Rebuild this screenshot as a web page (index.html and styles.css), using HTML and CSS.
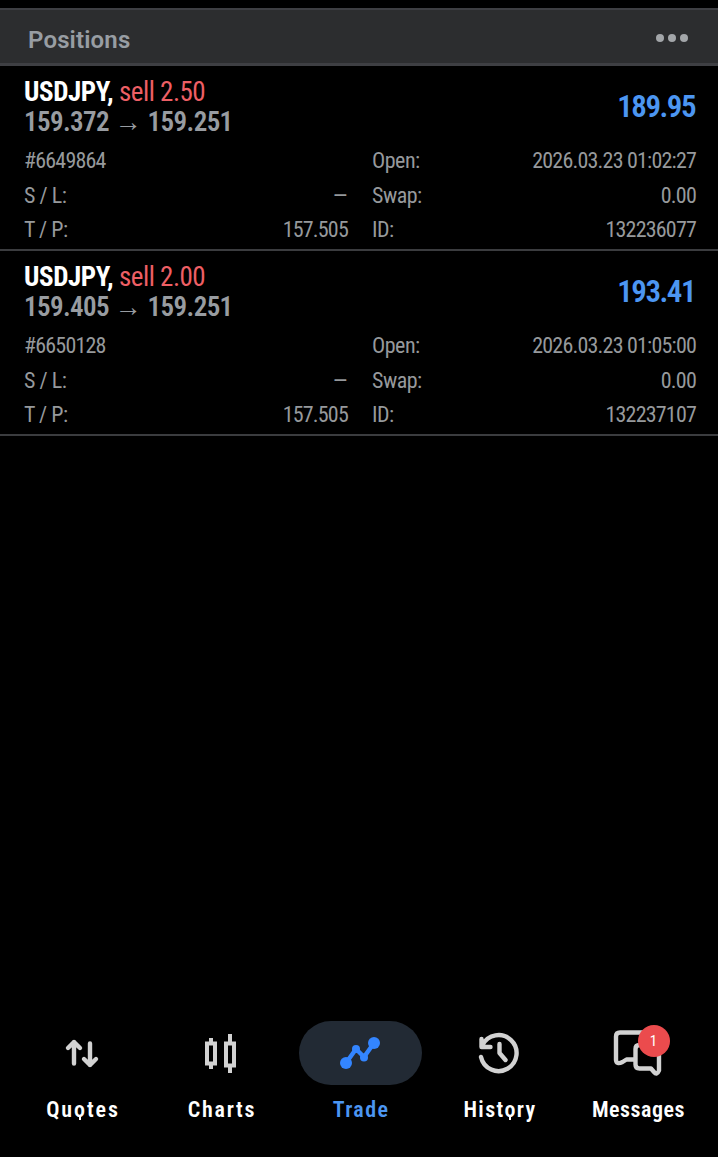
FILE: index.html
```html
<!DOCTYPE html>
<html lang="en">
<head>
<meta charset="utf-8">
<title>Trade</title>
<link rel="stylesheet" href="styles.css">
</head>
<body>
<header class="bar">
	<h1>Positions</h1>
	<div class="more"><i></i><i></i><i></i></div>
</header>
<main>
	<section class="position">
		<div class="summary">
			<div>
				<p class="symbol"><b>USDJPY,</b> <span class="sell">sell 2.50</span></p>
				<p class="prices">159.372 <span class="arrow">→</span> 159.251</p>
			</div>
			<p class="profit">189.95</p>
		</div>
		<div class="details">
			<p><span class="num">#6649864</span></p>
			<p><span>Open:</span><span class="num">2026.03.23 01:02:27</span></p>
			<p><span>S / L:</span><span class="dash">–</span></p>
			<p><span>Swap:</span><span class="num">0.00</span></p>
			<p><span>T / P:</span><span class="num">157.505</span></p>
			<p><span>ID:</span><span class="num">132236077</span></p>
		</div>
	</section>
	<section class="position">
		<div class="summary">
			<div>
				<p class="symbol"><b>USDJPY,</b> <span class="sell">sell 2.00</span></p>
				<p class="prices">159.405 <span class="arrow">→</span> 159.251</p>
			</div>
			<p class="profit">193.41</p>
		</div>
		<div class="details">
			<p><span class="num">#6650128</span></p>
			<p><span>Open:</span><span class="num">2026.03.23 01:05:00</span></p>
			<p><span>S / L:</span><span class="dash">–</span></p>
			<p><span>Swap:</span><span class="num">0.00</span></p>
			<p><span>T / P:</span><span class="num">157.505</span></p>
			<p><span>ID:</span><span class="num">132237107</span></p>
		</div>
	</section>
</main>
<nav class="tabs">
	<a class="tab quotes">
		<span class="pill"><svg width="64" height="64" viewBox="0 0 64 64"><path d="M24 42.500V21M18 27l6-6 6 6M40 22.500v21.500M34 38l6 6 6-6"/></svg></span>
		<span class="label">Qu<span class="pin">o</span>tes</span>
	</a>
	<a class="tab charts">
		<span class="pill"><svg class="square" width="64" height="64" viewBox="0 0 64 64"><path d="M18 22.500h8v20h-8zM22 17v5M22 43v5M37 22.500h8v22h-8zM41 13v9M41 45v7"/></svg></span>
		<span class="label">Charts</span>
	</a>
	<a class="tab trade active">
		<span class="pill"><svg width="64" height="64" viewBox="0 0 64 64"><path d="M18 42L28 28l8 8L46 22"/><g class="dots"><circle cx="18" cy="42" r="6"/><circle cx="28" cy="28" r="4"/><circle cx="36" cy="36.500" r="4"/><circle cx="46" cy="22" r="6"/></g></svg></span>
		<span class="label">Trade</span>
	</a>
	<a class="tab history">
		<span class="pill"><svg width="64" height="64" viewBox="0 0 64 64"><path d="M14 36A18 18 0 1 0 15.500 24M14.500 18v8h9M32.500 23v9l6 7"/></svg></span>
		<span class="label">Hist<span class="pin">o</span>ry</span>
	</a>
	<a class="tab messages">
		<span class="pill"><svg width="64" height="64" viewBox="0 0 64 64"><path d="M28 38.500H20.500l-4 2.500q-6 3-6.500-2V15.500q0-4 4-4h30q4 0 4 4M33.500 24H49q4 0 4 4v21.500q-2 5-5 1.500l-3-3.500H33.500q-4 0-4-4V28q0-4 4-4z"/></svg><span class="badge">1</span></span>
		<span class="label">Messages</span>
	</a>
</nav>
</body>
</html>
```

FILE: styles.css
```css
* { box-sizing: border-box; }
body { margin: 0; padding-top: 8px; height: 1157px; display: flex; flex-direction: column;
       background: #000000; color: #96999c; font-family: "Roboto Condensed", Roboto, sans-serif; }
p, h1 { margin: 0; }
main { flex: 1; font-stretch: 75%; }
.bar { display: flex; justify-content: space-between; align-items: center; height: 58px; padding: 0 30px 0 28px;
       background: #2c2d2f; border-top: 2px solid #3e3f43; border-bottom: 3px solid #3e3f43; }
h1 { font-family: Roboto, sans-serif; font-size: 24px; font-weight: 600; line-height: 30px; padding-top: 6px; color: #989da3; letter-spacing: 0.15px; }
.more { display: flex; gap: 4px; padding-top: 2px; }
.more i { width: 8px; height: 8px; border-radius: 50%; background: #a3a6a9; }

.position { height: 185px; padding: 11px 22px 0 24px; border-bottom: 2px solid #3b3c3f; }
.summary { display: flex; justify-content: space-between; align-items: center; height: 60px; }
.symbol { font-size: 27px; line-height: 30px; color: #ffffff; letter-spacing: -0.4px; }
.sell { color: #ee5f65; letter-spacing: -0.5px; }
.prices { font-size: 27px; line-height: 30px; font-weight: 600; color: #989ca1; letter-spacing: -0.6px; }
.arrow { margin-right: 1px; }
.profit { font-size: 31px; line-height: 36px; font-weight: 600; color: #4c96f2; letter-spacing: -1.5px; margin-right: 1px; }
.details { display: grid; grid-template-columns: 324px 324px; column-gap: 24px; padding-top: 7px; }
.details p { display: flex; justify-content: space-between; font-size: 22px; line-height: 34.6px; letter-spacing: -0.5px; }
.details .num { letter-spacing: -0.8px; }
.dash { transform: scaleX(1.3); transform-origin: right; }

.tabs { display: grid; grid-template-columns: repeat(5, 139px); justify-content: center; height: 136px; padding-left: 2px; }
.tab { display: flex; flex-direction: column; align-items: center; color: #ffffff; }
.pill { position: relative; display: flex; justify-content: center; width: 123px; height: 64px; border-radius: 32px; }
.pill svg { fill: none; stroke: #d2d2d2; stroke-width: 4.400; stroke-linecap: round; stroke-linejoin: round; }
.pill svg.square { stroke-width: 4; stroke-linecap: butt; stroke-linejoin: miter; }
.label { font-family: Roboto, sans-serif; font-stretch: 85%; font-size: 22px; font-weight: 600; line-height: 28px;
         padding-top: 11px; letter-spacing: 1.4px; margin-right: -2px; }
.quotes .label { letter-spacing: 1.9px; }
.charts .label { letter-spacing: 1.7px; }
.messages .label { letter-spacing: 0.5px; margin-right: -1px; }
/* small tail hanging under the letter */
.pin { position: relative; }
.pin::after { content: ""; position: absolute; left: 5px; bottom: 2px; width: 2px; height: 3px; background: currentColor; }
.active { color: #4c96f2; }
.active .pill { background: #222a34; }
.pill .dots { fill: #3385ff; stroke: none; }
.active .pill svg { stroke: #3385ff; }
.badge { position: absolute; top: 4px; left: 61px; width: 32px; height: 32px; border-radius: 50%;
         background: #eb4b4d; font-size: 15px; line-height: 32px; text-align: center; }
```
